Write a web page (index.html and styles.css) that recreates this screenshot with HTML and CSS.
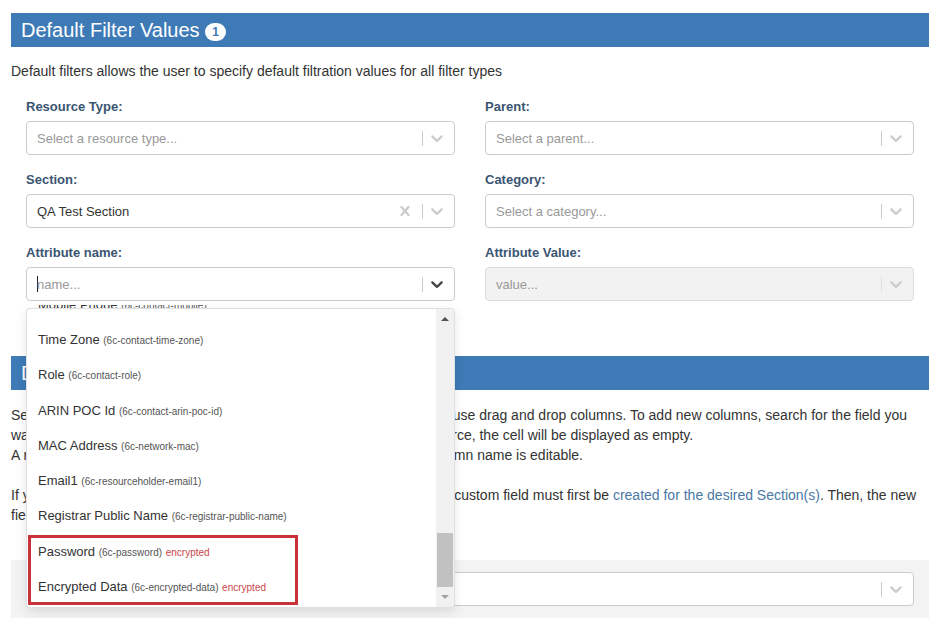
FILE: index.html
```html
<!DOCTYPE html>
<html lang="en">
<head>
<meta charset="utf-8">
<title>Default Filter Values</title>
<link rel="stylesheet" href="styles.css">
</head>
<body>
<div class="page">
  <section class="panel">
    <h2 class="panel-head">Default Filter Values <span class="badge">1</span></h2>
    <p class="intro">Default filters allows the user to specify default filtration values for all filter types</p>
    <div class="form-grid">
      <div class="field">
        <label class="field-label">Resource Type:</label>
        <div class="select">
          <span class="select-value placeholder">Select a resource type...</span>
          <span class="indicators"><span class="sep"></span><svg class="ind" viewBox="0 0 20 20"><path d="M4.516 7.548c0.436-0.446 1.043-0.481 1.576 0l3.908 3.747 3.908-3.747c0.533-0.481 1.141-0.446 1.574 0 0.436 0.445 0.408 1.197 0 1.615-0.406 0.418-4.695 4.502-4.695 4.502-0.217 0.223-0.502 0.335-0.787 0.335s-0.57-0.112-0.789-0.335c0 0-4.287-4.084-4.695-4.502s-0.436-1.17 0-1.615z"/></svg></span>
        </div>
      </div>
      <div class="field">
        <label class="field-label">Parent:</label>
        <div class="select">
          <span class="select-value placeholder">Select a parent...</span>
          <span class="indicators"><span class="sep"></span><svg class="ind" viewBox="0 0 20 20"><path d="M4.516 7.548c0.436-0.446 1.043-0.481 1.576 0l3.908 3.747 3.908-3.747c0.533-0.481 1.141-0.446 1.574 0 0.436 0.445 0.408 1.197 0 1.615-0.406 0.418-4.695 4.502-4.695 4.502-0.217 0.223-0.502 0.335-0.787 0.335s-0.57-0.112-0.789-0.335c0 0-4.287-4.084-4.695-4.502s-0.436-1.17 0-1.615z"/></svg></span>
        </div>
      </div>
      <div class="field">
        <label class="field-label">Section:</label>
        <div class="select">
          <span class="select-value">QA Test Section</span>
          <span class="indicators"><svg class="clear" viewBox="0 0 20 20"><path d="M14.348 14.849c-0.469 0.469-1.229 0.469-1.697 0l-2.651-3.030-2.651 3.029c-0.469 0.469-1.229 0.469-1.697 0-0.469-0.469-0.469-1.229 0-1.697l2.758-3.15-2.759-3.152c-0.469-0.469-0.469-1.228 0-1.697s1.228-0.469 1.697 0l2.652 3.031 2.651-3.031c0.469-0.469 1.228-0.469 1.697 0s0.469 1.229 0 1.697l-2.758 3.152 2.758 3.15c0.469 0.469 0.469 1.229 0 1.698z"/></svg><span class="sep"></span><svg class="ind" viewBox="0 0 20 20"><path d="M4.516 7.548c0.436-0.446 1.043-0.481 1.576 0l3.908 3.747 3.908-3.747c0.533-0.481 1.141-0.446 1.574 0 0.436 0.445 0.408 1.197 0 1.615-0.406 0.418-4.695 4.502-4.695 4.502-0.217 0.223-0.502 0.335-0.787 0.335s-0.57-0.112-0.789-0.335c0 0-4.287-4.084-4.695-4.502s-0.436-1.17 0-1.615z"/></svg></span>
        </div>
      </div>
      <div class="field">
        <label class="field-label">Category:</label>
        <div class="select">
          <span class="select-value placeholder">Select a category...</span>
          <span class="indicators"><span class="sep"></span><svg class="ind" viewBox="0 0 20 20"><path d="M4.516 7.548c0.436-0.446 1.043-0.481 1.576 0l3.908 3.747 3.908-3.747c0.533-0.481 1.141-0.446 1.574 0 0.436 0.445 0.408 1.197 0 1.615-0.406 0.418-4.695 4.502-4.695 4.502-0.217 0.223-0.502 0.335-0.787 0.335s-0.57-0.112-0.789-0.335c0 0-4.287-4.084-4.695-4.502s-0.436-1.17 0-1.615z"/></svg></span>
        </div>
      </div>
      <div class="field">
        <label class="field-label">Attribute name:</label>
        <div class="select-wrap">
          <div class="select focused">
            <span class="select-value"><span class="cursor"></span><span class="placeholder">name...</span></span>
            <span class="indicators"><span class="sep"></span><svg class="ind" viewBox="0 0 20 20"><path d="M4.516 7.548c0.436-0.446 1.043-0.481 1.576 0l3.908 3.747 3.908-3.747c0.533-0.481 1.141-0.446 1.574 0 0.436 0.445 0.408 1.197 0 1.615-0.406 0.418-4.695 4.502-4.695 4.502-0.217 0.223-0.502 0.335-0.787 0.335s-0.57-0.112-0.789-0.335c0 0-4.287-4.084-4.695-4.502s-0.436-1.17 0-1.615z"/></svg></span>
          </div>
          <div class="menu">
            <div class="menu-peek"><div class="opt-line">Mobile Phone <span class="code">(6c-contact-mobile)</span></div></div>
            <div class="menu-box">
              <div class="menu-list">
                <div class="opt">Time Zone <span class="code">(6c-contact-time-zone)</span></div>
                <div class="opt">Role <span class="code">(6c-contact-role)</span></div>
                <div class="opt">ARIN POC Id <span class="code">(6c-contact-arin-poc-id)</span></div>
                <div class="opt">MAC Address <span class="code">(6c-network-mac)</span></div>
                <div class="opt">Email1 <span class="code">(6c-resourceholder-email1)</span></div>
                <div class="opt">Registrar Public Name <span class="code">(6c-registrar-public-name)</span></div>
                <div class="flagged">
                  <div class="opt">Password <span class="code">(6c-password)</span> <span class="enc">encrypted</span></div>
                  <div class="opt">Encrypted Data <span class="code">(6c-encrypted-data)</span> <span class="enc">encrypted</span></div>
                </div>
              </div>
              <div class="scrollbar">
                <div class="sb-btn sb-up"></div>
                <div class="sb-track"><div class="sb-thumb"></div></div>
                <div class="sb-btn sb-down"></div>
              </div>
            </div>
          </div>
        </div>
      </div>
      <div class="field">
        <label class="field-label">Attribute Value:</label>
        <div class="select disabled">
          <span class="select-value placeholder">value...</span>
          <span class="indicators"><span class="sep"></span><svg class="ind" viewBox="0 0 20 20"><path d="M4.516 7.548c0.436-0.446 1.043-0.481 1.576 0l3.908 3.747 3.908-3.747c0.533-0.481 1.141-0.446 1.574 0 0.436 0.445 0.408 1.197 0 1.615-0.406 0.418-4.695 4.502-4.695 4.502-0.217 0.223-0.502 0.335-0.787 0.335s-0.57-0.112-0.789-0.335c0 0-4.287-4.084-4.695-4.502s-0.436-1.17 0-1.615z"/></svg></span>
        </div>
      </div>
    </div>
  </section>

  <section class="panel">
    <h2 class="panel-head">Default Columns</h2>
    <p class="help">Select the columns to view in the resource list. To reorder the columns, use drag and drop columns. To add new columns, search for the field you<br>want to add. If the field you selected is not available for a specific resource, the cell will be displayed as empty.<br>A rename of columns is possible by double click on the header, the column name is editable.</p>
    <p class="help">If you want to use another field in the table that doesn't exist yet, a new custom field must first be <a href="#">created for the desired Section(s)</a>. Then, the new<br>field will be available here.</p>
    <div class="column-picker">
      <div class="select">
        <span class="select-value placeholder">Search for a field...</span>
        <span class="indicators"><span class="sep"></span><svg class="ind" viewBox="0 0 20 20"><path d="M4.516 7.548c0.436-0.446 1.043-0.481 1.576 0l3.908 3.747 3.908-3.747c0.533-0.481 1.141-0.446 1.574 0 0.436 0.445 0.408 1.197 0 1.615-0.406 0.418-4.695 4.502-4.695 4.502-0.217 0.223-0.502 0.335-0.787 0.335s-0.57-0.112-0.789-0.335c0 0-4.287-4.084-4.695-4.502s-0.436-1.17 0-1.615z"/></svg></span>
      </div>
    </div>
  </section>
</div>
</body>
</html>
```
FILE: styles.css
```css
* { box-sizing: border-box; }

body {
  margin: 0;
  background: #fff;
  font-family: "Liberation Sans", Arial, sans-serif;
  font-size: 14px;
  color: #333;
}

.page {
  width: 938px;
  padding: 13px 9px 0 11px;
}

.panel + .panel { margin-top: 39px; }

.panel-head {
  margin: 0;
  height: 34px;
  padding-left: 10px;
  background: #3e7ab6;
  color: #fff;
  font-size: 20px;
  font-weight: normal;
  line-height: 34px;
  white-space: nowrap;
}

.badge {
  display: inline-block;
  vertical-align: middle;
  height: 18px;
  padding: 0 7px;
  border-radius: 9px;
  background: #fff;
  color: #3e7ab6;
  font-size: 12px;
  font-weight: bold;
  line-height: 18px;
}

.intro {
  margin: 14px 0 17px;
  line-height: 20px;
}

.form-grid {
  display: grid;
  grid-template-columns: 1fr 1fr;
}

.field {
  padding: 0 15px;
  margin-bottom: 16px;
}

.field-label {
  display: block;
  margin-bottom: 5px;
  font-size: 13px;
  font-weight: bold;
  line-height: 18px;
  color: #3a5572;
}

.select {
  display: flex;
  align-items: center;
  height: 34px;
  padding-left: 10px;
  border: 1px solid #ccc;
  border-radius: 4px;
  background: #fff;
  font-size: 13px;
}

.select.disabled {
  background: #f2f2f2;
  border-color: #ddd;
}

.select.disabled .sep { background: #e0e0e0; }

.select-value {
  flex: 1;
  display: flex;
  align-items: center;
  color: #333;
  white-space: nowrap;
  overflow: hidden;
}

.placeholder { color: #999; }

.cursor {
  display: inline-block;
  width: 1px;
  height: 16px;
  margin-right: -1px;
  background: #222;
}

.indicators {
  display: flex;
  align-items: center;
  height: 100%;
}

.sep {
  width: 1px;
  height: 15px;
  margin-right: 4px;
  background: #ccc;
}

.ind, .clear {
  width: 20px;
  height: 20px;
  fill: #ccc;
  margin-right: 7px;
}

.focused .ind { fill: #444; }

.select-wrap { position: relative; }

.menu {
  position: absolute;
  top: 100%;
  left: 0;
  right: 0;
  z-index: 10;
}

.menu-peek {
  height: 3px;
  margin-top: 4px;
  padding-left: 12px;
  overflow: hidden;
  font-size: 13px;
}

.menu-peek .opt-line {
  margin-top: -10px;
  line-height: 19px;
  white-space: nowrap;
}

.menu-box {
  display: flex;
  height: 300px;
  background: #fff;
  border: 1px solid rgba(0, 0, 0, 0.12);
  border-radius: 4px;
  box-shadow: 0 4px 11px rgba(0, 0, 0, 0.1);
  overflow: hidden;
}

.menu-list {
  flex: 1;
  padding-top: 13px;
  overflow: hidden;
}

.opt {
  height: 35.25px;
  padding: 8px 11px;
  font-size: 13px;
  line-height: 19.25px;
  color: #333;
  white-space: nowrap;
  overflow: hidden;
}

.code {
  font-size: 10px;
  color: #555;
}

.enc {
  font-size: 10px;
  color: #c9454b;
}

.flagged { position: relative; }

.flagged::after {
  content: "";
  position: absolute;
  left: 1px;
  top: 1px;
  bottom: -1px;
  width: 264px;
  border: 3px solid #c8323a;
}

.scrollbar {
  width: 18px;
  display: flex;
  flex-direction: column;
  background: #f1f1f1;
}

.sb-btn {
  height: 20px;
  display: flex;
  align-items: center;
  justify-content: center;
}

.sb-up::before {
  content: "";
  border-left: 4px solid transparent;
  border-right: 4px solid transparent;
  border-bottom: 4px solid #505050;
}

.sb-down::before {
  content: "";
  border-left: 4px solid transparent;
  border-right: 4px solid transparent;
  border-top: 4px solid #a3a3a3;
}

.sb-track { flex: 1; }

.sb-thumb {
  height: 54px;
  margin: 204px 1px 0;
  background: #c1c1c1;
}

.help {
  margin: 15px 0 0;
  line-height: 20px;
}

.help + .help { margin-top: 20px; }

.help a {
  color: #4a78a6;
  text-decoration: none;
}

.column-picker {
  margin-top: 35px;
  padding: 12px 15px;
  background: #f3f3f3;
}
```
